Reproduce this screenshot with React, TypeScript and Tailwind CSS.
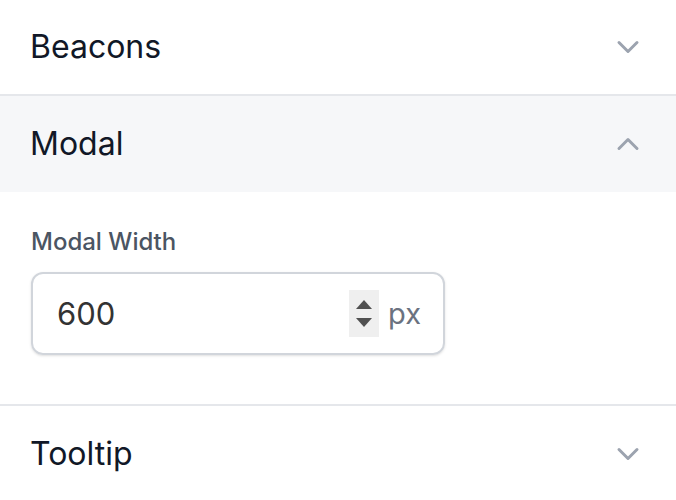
import React from "react";
import { ChevronDown, ChevronUp } from "lucide-react";

function Header({ title, open, h }: { title: string; open?: boolean; h: string }) {
  return (
    <div className={`flex items-center justify-between pl-[30px] pr-[30px] ${h} ${open ? "bg-[#f6f7f9]" : "bg-white"}`}>
      <span className="text-[32px] text-[#111827] font-normal leading-none">{title}</span>
      {open ? (
        <ChevronUp size={36} strokeWidth={2} className="text-[#9ca3af]" />
      ) : (
        <ChevronDown size={36} strokeWidth={2} className="text-[#9ca3af]" />
      )}
    </div>
  );
}

export default function App() {
  return (
    <div className="w-[676px] h-[500px] overflow-hidden bg-white" style={{ fontFamily: "Inter, 'Noto Sans', sans-serif" }}>
      <div className="border-b-2 border-[#e5e7eb]">
        <Header title="Beacons" h="h-[94px]" />
      </div>
      <div className="border-b-2 border-[#e5e7eb]">
        <Header title="Modal" open h="h-[96px]" />
        <div className="pl-[31px] pt-[34px] pb-[49px]">
          <div className="text-[24px] leading-[32px] font-medium text-[#4b5563]">Modal Width</div>
          <div className="mt-[14px] w-[414px] h-[83px] rounded-[12px] border-2 border-[#d1d5db] shadow-sm flex items-center pl-[24px] pr-[22px]">
            <span className="flex-1 text-[31px] text-[#333333] leading-none">600</span>
            <div className="w-[30px] h-[47px] bg-[#efefef] flex flex-col items-center justify-center gap-[9px]">
              <svg width="16" height="9" viewBox="0 0 16 9"><polygon points="8,0 16,9 0,9" fill="#505050" /></svg>
              <svg width="16" height="9" viewBox="0 0 16 9"><polygon points="0,0 16,0 8,9" fill="#505050" /></svg>
            </div>
            <span className="ml-[9px] text-[29px] text-[#6b7280] leading-none">px</span>
          </div>
        </div>
      </div>
      <Header title="Tooltip" h="h-[96px]" />
    </div>
  );
}
